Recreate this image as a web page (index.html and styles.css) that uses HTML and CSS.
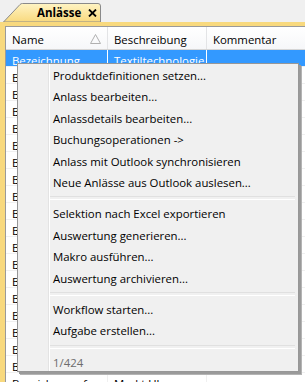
FILE: index.html
```html
<!DOCTYPE html>
<html lang="de">
<head>
    <meta charset="UTF-8">
    <title>Anlässe</title>
    <link rel="stylesheet" href="styles.css">
</head>
<body>
    <div class="tabbar">
        <div class="tab">
            <svg class="tab-shape" width="98" height="19" viewBox="0 0 98 19">
                <defs>
                    <linearGradient id="tabfill" x1="0" y1="0" x2="0" y2="1">
                        <stop offset="0" stop-color="#fff4c4"/>
                        <stop offset="1" stop-color="#f8d97e"/>
                    </linearGradient>
                </defs>
                <path d="M0.5 19 L17 1.5 Q18 0.5 19.5 0.5 L95 0.5 Q97.5 0.5 97.5 3 L97.5 19 Z" fill="url(#tabfill)" stroke="#8a8a8a"/>
            </svg>
            <span class="tab-title">Anlässe</span>
            <svg class="tab-close" width="9" height="8" viewBox="0 0 9 8">
                <path d="M1 0.5 L8 7.5 M8 0.5 L1 7.5" stroke="#000" stroke-width="1.8"/>
            </svg>
        </div>
    </div>
    <div class="panel">
        <div class="grid">
            <div class="header">
                <div class="col col-name">Name
                    <svg class="sort" width="11" height="10" viewBox="0 0 11 10">
                        <path d="M5.5 0.5 L10.5 9.5 L0.5 9.5 Z" fill="none" stroke="#b0b0b0"/>
                    </svg>
                </div>
                <div class="col col-desc">Beschreibung</div>
                <div class="col col-comm">Kommentar</div>
            </div>
            <div class="rows" id="rows">
                <div class="row selected">
                    <div class="cell col-name">Bezeichnung</div>
                    <div class="cell col-desc">Textiltechnologie</div>
                    <div class="cell col-comm"></div>
                </div>
            </div>
        </div>

        <div class="menu">
            <div class="menu-item">Produktdefinitionen setzen...</div>
            <div class="menu-item">Anlass bearbeiten...</div>
            <div class="menu-item">Anlassdetails bearbeiten...</div>
            <div class="menu-item">Buchungsoperationen -&gt;</div>
            <div class="menu-item">Anlass mit Outlook synchronisieren</div>
            <div class="menu-item">Neue Anlässe aus Outlook auslesen...</div>
            <div class="menu-sep"></div>
            <div class="menu-item">Selektion nach Excel exportieren</div>
            <div class="menu-item">Auswertung generieren...</div>
            <div class="menu-item">Makro ausführen...</div>
            <div class="menu-item">Auswertung archivieren...</div>
            <div class="menu-sep"></div>
            <div class="menu-item">Workflow starten...</div>
            <div class="menu-item">Aufgabe erstellen...</div>
            <div class="menu-sep"></div>
            <div class="menu-item disabled">1/424</div>
        </div>
    </div>
    <script>
        const rows = document.getElementById('rows');
        // filler rows behind the context menu
        for (let i = 0; i < 19; i++) {
            const row = document.createElement('div');
            row.className = 'row';
            const last = i === 18;
            row.innerHTML =
                '<div class="cell col-name">' + (last ? 'Bezeichnung f' : 'Bezeichnung') + '</div>' +
                '<div class="cell col-desc">' + (last ? 'Markt Uhr' : 'Markt') + '</div>' +
                '<div class="cell col-comm"></div>';
            rows.appendChild(row);
        }
    </script>
</body>
</html>
```

FILE: styles.css
```css
body {
    margin: 0;
    width: 305px;
    height: 382px;
    overflow: hidden;
    background-color: #f0f0f0;
    font-family: 'Open Sans', 'Noto Sans', sans-serif;
    font-size: 11.4px;
    color: #000;
}

.tabbar {
    height: 22px;
    padding-left: 3px;
    display: flex;
    align-items: flex-end;
}

.tab {
    position: relative;
    width: 98px;
    height: 19px;
    display: flex;
    align-items: center;
}

.tab-shape {
    position: absolute;
    left: 0;
    top: 0;
}

.tab-title {
    position: relative;
    width: 51px;
    margin-left: 34px;
    font-weight: bold;
    font-size: 11.5px;
}

.tab-close {
    position: relative;
    margin-top: 1px;
}

.panel {
    position: relative;
    height: 360px;
    background-color: #f8d97e;
    padding: 4px 0 0 5px;
    box-sizing: border-box;
}

.grid {
    height: 100%;
    background-color: #fff;
    border-top: 1px solid #9a9a9a;
    border-left: 1px solid #9a9a9a;
    overflow: hidden;
}

.header {
    display: flex;
    height: 22px;
    border-bottom: 1px solid #d5d5d5;
    background: linear-gradient(#ffffff, #f6f7f9);
}

.col {
    display: flex;
    align-items: center;
    padding: 2px 0 0 6px;
    box-sizing: border-box;
    border-right: 1px solid #e3e4e6;
}

.col-name {
    width: 102px;
    position: relative;
}

.col-desc {
    width: 99px;
}

.col-comm {
    flex: 1;
    border-right: none;
}

.sort {
    position: absolute;
    left: 84px;
    top: 7px;
}

.row {
    display: flex;
    height: 17px;
    border-bottom: 1px solid #f0f0f0;
    box-sizing: border-box;
    overflow: hidden;
}

.cell {
    padding: 3px 0 0 6px;
    line-height: 16px;
    white-space: nowrap;
    overflow: hidden;
    box-sizing: border-box;
    border-right: 1px solid #f0f0f0;
}

.cell.col-comm {
    border-right: none;
}

.row.selected {
    background-color: #3399ff;
    color: #fff;
}

.row.selected .cell {
    border-right-color: #ffffff;
}

.menu {
    position: absolute;
    left: 17px;
    top: 41px;
    width: 282px;
    height: 309px;
    box-sizing: border-box;
    padding: 1px 3px 2px 3px;
    background: linear-gradient(to right, #f0f0f0 30px, #e3e3e3 30px, #e3e3e3 31px, #ffffff 31px, #ffffff 32px, #f0f0f0 32px);
    border: 1px solid #979797;
    box-shadow: 2px 2px 0 #9a9a9a, 3px 3px 0 #b4b4b4;
}

.menu-item {
    height: 21.4px;
    line-height: 21px;
    padding-left: 32px;
    white-space: nowrap;
}

.menu-item.disabled {
    color: #6d6d6d;
}

.menu-sep {
    height: 2px;
    margin: 3px 0 3px 29px;
    border-top: 1px solid #e0e0e0;
    border-bottom: 1px solid #ffffff;
}
```
